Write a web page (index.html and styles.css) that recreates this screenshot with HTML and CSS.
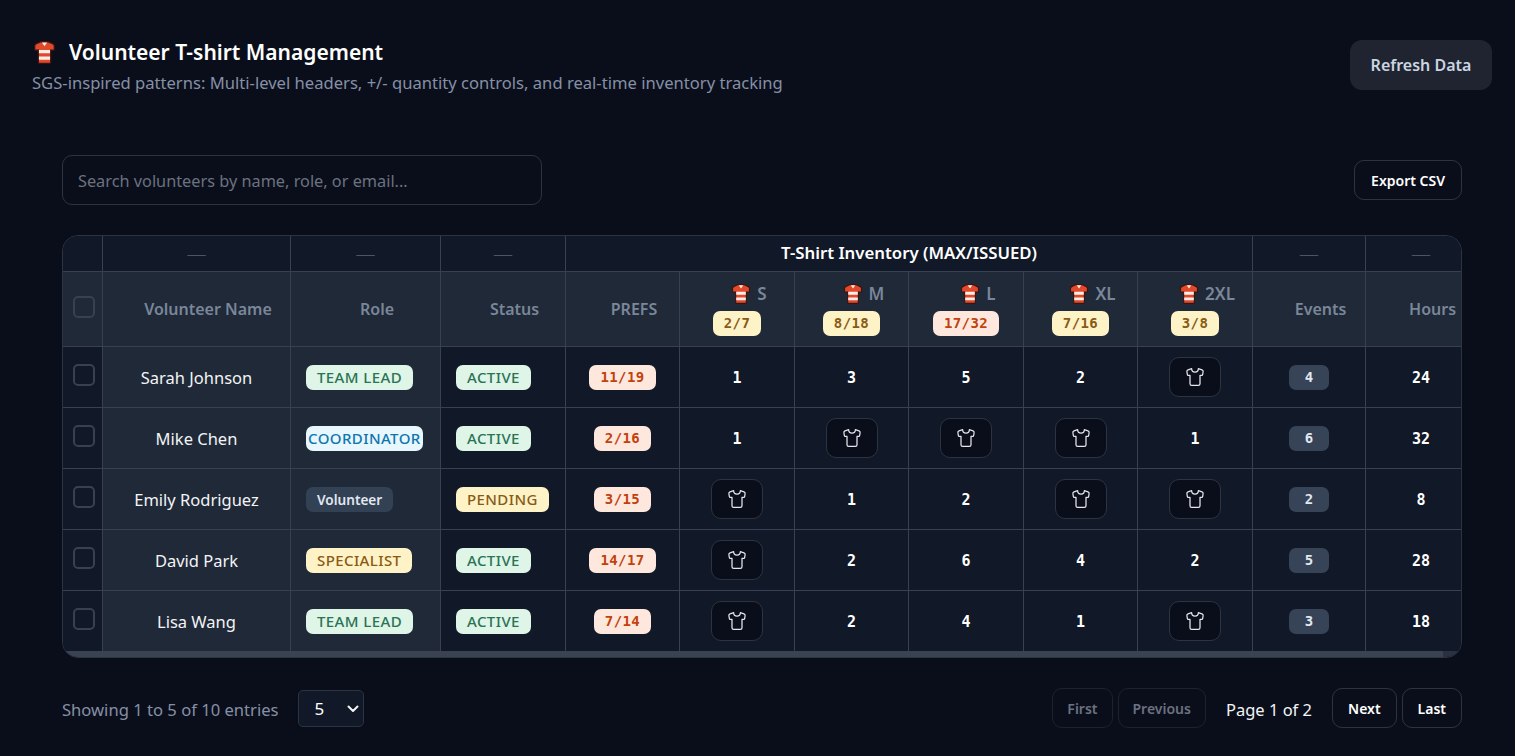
FILE: index.html
```html
<!DOCTYPE html>
<html>

<head>
  <title>Volunteer T-shirt Management</title>
  <meta charset="UTF-8" />
  <link rel="stylesheet" href="styles.css">
</head>

<body>

  <svg class="defs" width="0" height="0">
    <symbol id="tee" viewBox="0 0 20 22">
      <path fill="#3b1410" d="M6 0h8l1 .6L19 2.500 20 4v4.500l-1 1h-2.500V21l-1 1H4.500l-1-1V9.500H1l-1-1V4l1-1.500L5 .6z"/>
      <path fill="#e0492c" d="M6.500 1.400h7L18 3.400l.8 1.200v3.600h-3.500V20.800H4.700V8.200H1.200V4.600L2 3.400z"/>
      <path fill="#fbeee6" d="M7.500 1.400h5L10 5zM4.700 8.600h10.600v3.200H4.700zM4.700 14.800h10.600V18H4.700z"/>
    </symbol>
    <symbol id="shirt" viewBox="0 0 24 24">
      <path fill="none" stroke="currentColor" stroke-width="1.500" stroke-linecap="round" stroke-linejoin="round" d="M20.380 3.460 16 2a4 4 0 0 1-8 0L3.620 3.460a2 2 0 0 0-1.340 2.230l.58 3.470a1 1 0 0 0 .99.84H6v10c0 1.100.9 2 2 2h8a2 2 0 0 0 2-2V10h2.150a1 1 0 0 0 .99-.84l.58-3.470a2 2 0 0 0-1.340-2.230z"/>
    </symbol>
  </svg>

  <div class="page">

    <header class="top">
      <div>
        <h1 class="title"><svg class="tee-lg"><use href="#tee"/></svg>Volunteer T-shirt Management</h1>
        <p class="subtitle">SGS-inspired patterns: Multi-level headers, +/- quantity controls, and real-time inventory tracking</p>
      </div>
      <button class="refresh">Refresh Data</button>
    </header>

    <div class="content">

      <div class="toolbar">
        <input class="search" type="text" placeholder="Search volunteers by name, role, or email...">
        <button class="btn export">Export CSV</button>
      </div>

      <div class="table-wrap">
        <table class="grid">
          <colgroup>
            <col class="c-check"><col class="c-name"><col class="c-role"><col class="c-status"><col class="c-prefs">
            <col class="c-s"><col class="c-m"><col class="c-s"><col class="c-m"><col class="c-s">
            <col class="c-events"><col class="c-hours">
          </colgroup>
          <thead>
            <tr class="group-row">
              <th></th>
              <th class="dash">—</th>
              <th class="dash">—</th>
              <th class="dash">—</th>
              <th colspan="6" class="group-title">T-Shirt Inventory (MAX/ISSUED)</th>
              <th class="dash">—</th>
              <th class="dash">—</th>
            </tr>
            <tr class="head-row">
              <th><input class="check" type="checkbox"></th>
              <th><span class="label">Volunteer Name</span></th>
              <th><span class="label">Role</span></th>
              <th><span class="label">Status</span></th>
              <th><span class="label">PREFS</span></th>
              <th><span class="label size"><svg class="tee-sm"><use href="#tee"/></svg>S</span><span class="badge amber mono">2/7</span></th>
              <th><span class="label size"><svg class="tee-sm"><use href="#tee"/></svg>M</span><span class="badge amber mono">8/18</span></th>
              <th><span class="label size"><svg class="tee-sm"><use href="#tee"/></svg>L</span><span class="badge red mono">17/32</span></th>
              <th><span class="label size"><svg class="tee-sm"><use href="#tee"/></svg>XL</span><span class="badge amber mono">7/16</span></th>
              <th><span class="label size"><svg class="tee-sm"><use href="#tee"/></svg>2XL</span><span class="badge amber mono">3/8</span></th>
              <th><span class="label">Events</span></th>
              <th><span class="label">Hours</span></th>
            </tr>
          </thead>
          <tbody>
            <tr>
              <td><input class="check" type="checkbox"></td>
              <td class="name">Sarah Johnson</td>
              <td class="left"><span class="badge green">TEAM LEAD</span></td>
              <td class="left"><span class="badge green">ACTIVE</span></td>
              <td><span class="badge red mono">11/19</span></td>
              <td class="qty">1</td>
              <td class="qty">3</td>
              <td class="qty">5</td>
              <td class="qty">2</td>
              <td><button class="shirt"><svg class="shirt-icon"><use href="#shirt"/></svg></button></td>
              <td><span class="badge slate mono">4</span></td>
              <td class="qty">24</td>
            </tr>
            <tr>
              <td><input class="check" type="checkbox"></td>
              <td class="name">Mike Chen</td>
              <td class="left"><span class="badge blue">COORDINATOR</span></td>
              <td class="left"><span class="badge green">ACTIVE</span></td>
              <td><span class="badge red mono">2/16</span></td>
              <td class="qty">1</td>
              <td><button class="shirt"><svg class="shirt-icon"><use href="#shirt"/></svg></button></td>
              <td><button class="shirt"><svg class="shirt-icon"><use href="#shirt"/></svg></button></td>
              <td><button class="shirt"><svg class="shirt-icon"><use href="#shirt"/></svg></button></td>
              <td class="qty">1</td>
              <td><span class="badge slate mono">6</span></td>
              <td class="qty">32</td>
            </tr>
            <tr>
              <td><input class="check" type="checkbox"></td>
              <td class="name">Emily Rodriguez</td>
              <td class="left"><span class="badge plain">Volunteer</span></td>
              <td class="left"><span class="badge amber">PENDING</span></td>
              <td><span class="badge red mono">3/15</span></td>
              <td><button class="shirt"><svg class="shirt-icon"><use href="#shirt"/></svg></button></td>
              <td class="qty">1</td>
              <td class="qty">2</td>
              <td><button class="shirt"><svg class="shirt-icon"><use href="#shirt"/></svg></button></td>
              <td><button class="shirt"><svg class="shirt-icon"><use href="#shirt"/></svg></button></td>
              <td><span class="badge slate mono">2</span></td>
              <td class="qty">8</td>
            </tr>
            <tr>
              <td><input class="check" type="checkbox"></td>
              <td class="name">David Park</td>
              <td class="left"><span class="badge amber">SPECIALIST</span></td>
              <td class="left"><span class="badge green">ACTIVE</span></td>
              <td><span class="badge red mono">14/17</span></td>
              <td><button class="shirt"><svg class="shirt-icon"><use href="#shirt"/></svg></button></td>
              <td class="qty">2</td>
              <td class="qty">6</td>
              <td class="qty">4</td>
              <td class="qty">2</td>
              <td><span class="badge slate mono">5</span></td>
              <td class="qty">28</td>
            </tr>
            <tr>
              <td><input class="check" type="checkbox"></td>
              <td class="name">Lisa Wang</td>
              <td class="left"><span class="badge green">TEAM LEAD</span></td>
              <td class="left"><span class="badge green">ACTIVE</span></td>
              <td><span class="badge red mono">7/14</span></td>
              <td><button class="shirt"><svg class="shirt-icon"><use href="#shirt"/></svg></button></td>
              <td class="qty">2</td>
              <td class="qty">4</td>
              <td class="qty">1</td>
              <td><button class="shirt"><svg class="shirt-icon"><use href="#shirt"/></svg></button></td>
              <td><span class="badge slate mono">3</span></td>
              <td class="qty">18</td>
            </tr>
          </tbody>
        </table>
        <div class="scroll-track"><div class="scroll-thumb"></div></div>
      </div>

      <div class="pager">
        <div class="pager-left">
          <span class="entries">Showing 1 to 5 of 10 entries</span>
          <div class="select-box">
            <select class="per-page">
              <option>5</option>
              <option>10</option>
            </select>
            <svg class="chevron" viewBox="0 0 12 8"><path fill="none" stroke="currentColor" stroke-width="2" stroke-linecap="round" stroke-linejoin="round" d="M1.500 1.500 6 6l4.500-4.500"/></svg>
          </div>
        </div>
        <div class="pager-right">
          <button class="btn" disabled>First</button>
          <button class="btn" disabled>Previous</button>
          <span class="page-num">Page 1 of 2</span>
          <button class="btn">Next</button>
          <button class="btn">Last</button>
        </div>
      </div>

    </div>

  </div>

</body>

</html>
```
FILE: styles.css
```css
* {
  box-sizing: border-box;
}

html {
  color-scheme: dark;
}

body {
  margin: 0;
  background-color: #0a0e1a;
  color: #ffffff;
  font-family: "Noto Sans", "Open Sans", sans-serif;
  font-size: 16px;
}

.defs {
  display: block;
  height: 0;
}

.page {
  padding: 40px 23px 0 32px;
}

.top {
  display: flex;
  justify-content: space-between;
  align-items: center;
  height: 50px;
}

.title {
  display: flex;
  align-items: center;
  margin: 2px 0 0;
  font-size: 21px;
  line-height: 28px;
  font-weight: 600;
  color: #ffffff;
}

.tee-lg {
  width: 21px;
  height: 23px;
  margin: 0 14px 0 2px;
}

.tee-sm {
  width: 18px;
  height: 20px;
  margin-right: 7px;
}

.subtitle {
  margin: 6px 0 0;
  font-size: 16.6px;
  line-height: 22px;
  color: #8590a6;
}

.refresh {
  width: 142px;
  height: 50px;
  border: 0;
  border-radius: 12px;
  background-color: #1f2430;
  color: #cbd5e1;
  font: 600 16px "Noto Sans", sans-serif;
}

.content {
  padding: 65px 30px 0;
}

.toolbar {
  display: flex;
  justify-content: space-between;
  align-items: center;
  margin-bottom: 30px;
}

.search {
  width: 480px;
  height: 50px;
  padding: 2px 15px 0;
  border: 1px solid #2d3441;
  border-radius: 10px;
  background-color: #0a0e1a;
  color: #ffffff;
  font: 16.3px "Noto Sans", sans-serif;
}

.search::placeholder {
  color: #6b7280;
}

.btn {
  height: 40px;
  padding: 0 15px;
  border: 1px solid #2d3441;
  border-radius: 10px;
  background-color: #0a0e1a;
  color: #ffffff;
  font: 600 14px "Noto Sans", sans-serif;
}

.btn:disabled {
  padding: 0 14px;
  border-color: #1c2230;
  color: #6b7280;
}

.export {
  padding: 0 16px;
}

.table-wrap {
  height: 423px;
  overflow: hidden;
  border: 1px solid #2d3441;
  border-radius: 16px;
  background-color: #111827;
}

.scroll-track {
  height: 6px;
  background-color: #2a3140;
}

.scroll-thumb {
  width: 1380px;
  height: 6px;
  background-color: #3a4352;
}

.grid {
  width: 1414px;
  table-layout: fixed;
  border-collapse: separate;
  border-spacing: 0;
}

.c-check { width: 40px; }
.c-name { width: 188px; }
.c-role { width: 150px; }
.c-status { width: 125px; }
.c-prefs { width: 114px; }
.c-s { width: 115px; }
.c-m { width: 114px; }
.c-events { width: 113px; }
.c-hours { width: 111px; }

.grid th,
.grid td {
  padding: 0;
  border-right: 1px solid #374151;
  border-bottom: 1px solid #374151;
  text-align: center;
  vertical-align: middle;
}

.group-row th {
  height: 36px;
  background-color: #111827;
}

.group-row .dash {
  color: #4b5563;
  font-size: 20px;
  line-height: 20px;
  font-weight: 300;
}

.group-row .group-title {
  padding-bottom: 2px;
  color: #ffffff;
  font-size: 16.8px;
  font-weight: 600;
}

.head-row th {
  height: 75px;
  background-color: #1f2937;
  color: #7a8699;
  font-size: 16px;
  font-weight: 600;
}

.label {
  display: block;
  padding-left: 23px;
}

.size {
  display: flex;
  justify-content: center;
  align-items: center;
  height: 24px;
  margin-bottom: 5px;
  padding-left: 25px;
  font-size: 17px;
}

.grid tbody td {
  height: 61px;
  background-color: #111827;
}

.grid tbody tr:last-child td {
  height: 60px;
  border-bottom: 0;
}

.grid tbody td.name {
  padding-top: 1px;
  background-color: #1f2937;
  color: #f3f4f6;
  font-size: 16.5px;
}

.grid td.left {
  padding-left: 15px;
  text-align: left;
}

.grid tbody td.left:nth-child(3) {
  background-color: #1f2937;
}

.grid tbody td.qty {
  padding-top: 2px;
  font-family: "DejaVu Sans Mono", monospace;
  font-size: 15px;
  font-weight: 700;
}

.check {
  appearance: none;
  display: block;
  width: 22px;
  height: 22px;
  margin: -5px 0 0 10px;
  border: 2px solid #374151;
  border-radius: 5px;
  background-color: transparent;
}

.badge {
  display: inline-block;
  height: 25px;
  padding: 0 11px;
  border-radius: 7px;
  font-size: 15px;
  line-height: 25px;
  font-weight: 500;
  letter-spacing: .4px;
  vertical-align: middle;
}

.badge.mono {
  font-family: "DejaVu Sans Mono", monospace;
  font-size: 14px;
  font-weight: 700;
}

.green { background-color: #dff5e8; color: #2a7354; }
.amber { background-color: #fef3c7; color: #8a5a14; }
.red { background-color: #fee8dd; color: #c2410c; }
.blue { padding: 0 2px; background-color: #e8f6fe; color: #0f76ad; }
.badge.plain { background-color: #334155; color: #e2e8f0; font-size: 13.6px; font-weight: 600; letter-spacing: 0; }
.badge.slate { width: 40px; padding: 0; background-color: #374357; color: #e2e8f0; }

.shirt {
  display: inline-flex;
  justify-content: center;
  align-items: center;
  width: 52px;
  height: 40px;
  padding: 0;
  border: 1px solid #2d3441;
  border-radius: 10px;
  background-color: #0a0e1a;
  color: #e5e7eb;
  vertical-align: middle;
}

.shirt-icon {
  width: 20px;
  height: 20px;
}

.pager {
  display: flex;
  justify-content: space-between;
  align-items: center;
  margin-top: 30px;
}

.pager-left {
  display: flex;
  align-items: center;
  gap: 19px;
}

.entries {
  padding-top: 2px;
  color: #8590a6;
  font-size: 16.6px;
}

.select-box {
  position: relative;
  height: 37px;
}

.per-page {
  appearance: none;
  width: 66px;
  height: 37px;
  padding: 0 0 0 16px;
  border: 1px solid #2d3441;
  border-radius: 5px;
  background-color: #111827;
  color: #ffffff;
  font: 17px "Noto Sans", sans-serif;
}

.chevron {
  position: absolute;
  top: 15px;
  left: 49px;
  width: 12px;
  height: 8px;
  color: #f3f4f6;
  pointer-events: none;
}

.pager-right {
  display: flex;
  align-items: center;
  gap: 5px;
}

.page-num {
  margin: 2px 15px 0;
  color: #f3f4f6;
  font-size: 16.5px;
}
```
